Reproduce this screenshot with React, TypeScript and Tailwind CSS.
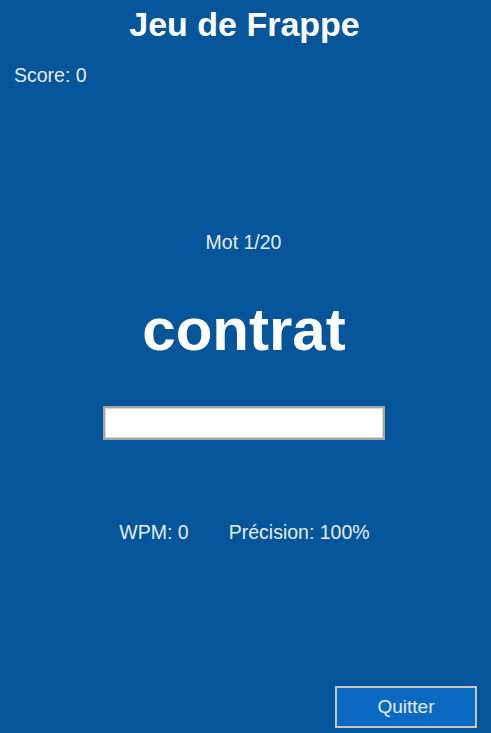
import React from "react";

export default function App() {
  return (
    <div
      className="flex min-h-[733px] w-full flex-col bg-[#05559a] text-white"
      style={{ fontFamily: '"Liberation Sans", Arial, sans-serif' }}
    >
      <h1 className="mt-[4px] h-[40px] pr-[2px] text-center text-[34px] font-bold leading-[40px] text-white">
        Jeu de Frappe
      </h1>
      <div className="mt-[19px] h-[24px] pl-[14px] text-[19.5px] leading-[24px] text-[#e6edf5]">
        Score: 0
      </div>
      <div className="mt-[143px] h-[24px] pr-[4px] text-center text-[19.5px] leading-[24px] text-[#e6edf5]">
        Mot 1/20
      </div>
      <div className="mt-[40px] h-[72px] pr-[3px] text-center text-[60px] font-bold leading-[72px] text-white">
        contrat
      </div>
      <div className="mt-[40px] flex justify-center">
        <input
          type="text"
          className="mr-[3px] h-[34px] w-[282px] border-2 border-solid border-[#a5a5a5] bg-white px-2 text-[19px] text-black outline-none shadow-[inset_0_0_0_1px_#d8d8d8]"
        />
      </div>
      <div className="mt-[80px] flex h-[24px] justify-center gap-[40px] pr-[2px] text-[19.5px] leading-[24px] text-[#e6edf5]">
        <span>WPM: 0</span>
        <span>Précision: 100%</span>
      </div>
      <div className="mt-[142px] mb-[5px] flex justify-end pr-[14px]">
        <button className="h-[42px] w-[142px] border-2 border-[#c6c6c6] bg-[#0a6ac2] text-[19px] text-[#e6edf5]">
          Quitter
        </button>
      </div>
    </div>
  );
}
